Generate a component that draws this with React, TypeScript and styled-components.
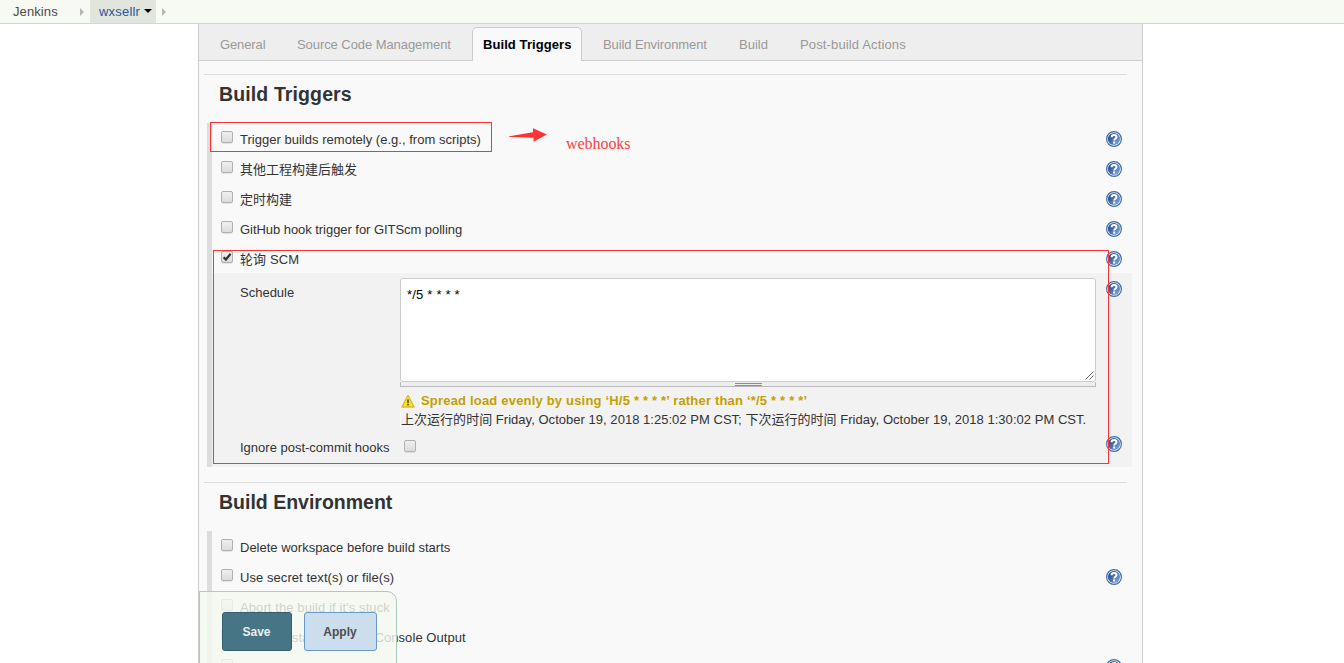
import React from "react";
import styled, { createGlobalStyle } from "styled-components";

const GlobalStyle = createGlobalStyle`
  * { box-sizing: border-box; }
  html, body { margin: 0; background: #fff; }
  body {
    height: 663px;
    overflow: hidden;
    color: #333;
    font: 13px/15px "Liberation Sans", "Noto Sans CJK SC", sans-serif;
  }
`;

const Page = styled.div`
  position: relative;
  height: 663px;
  overflow: hidden;
`;

const Breadcrumbs = styled.nav`
  display: flex;
  height: 24px;
  background: #f6faf2;
  border-bottom: 1px solid #d3d7cf;
`;

const Crumb = styled.span<{ $current?: boolean }>`
  display: flex;
  gap: 4px;
  width: ${(p) => (p.$current ? 66 : 80)}px;
  height: 23px;
  padding: ${(p) => (p.$current ? "4px 0 0 9px" : "4px 0 0 13px")};
  color: ${(p) => (p.$current ? "#2a5596" : "#4d4d4d")};
  background: ${(p) => (p.$current ? "#e2e5dc" : "transparent")};
  letter-spacing: ${(p) => (p.$current ? "0.2px" : "0.1px")};
`;

const Separator = styled.i<{ $before?: number }>`
  width: 0;
  height: 0;
  margin: 8px 6px 0 ${(p) => p.$before ?? 0}px;
  border: solid transparent;
  border-width: 4px 0 4px 4px;
  border-left-color: #b5b5b5;
`;

const Caret = styled.i`
  width: 0;
  height: 0;
  margin-top: 5px;
  border: solid transparent;
  border-width: 4px 4px 0 4px;
  border-top-color: #000;
`;

const Panel = styled.main`
  width: 945px;
  height: 639px;
  margin-left: 198px;
  overflow: hidden;
  background: #f9f9f9;
  border: solid #ccc;
  border-width: 0 1px;
`;

const TabBar = styled.div`
  display: flex;
  height: 37px;
  margin-bottom: 13px;
  padding: 3px 0 0 11px;
  background: #eee;
  border-bottom: 1px solid #ccc;
`;

const Tab = styled.div<{ $active?: boolean; $width: number; $tracking: number }>`
  width: ${(p) => p.$width}px;
  height: 34px;
  padding: ${(p) => (p.$active ? "9px 0 0 10px" : "10px 0 0 10px")};
  white-space: nowrap;
  letter-spacing: ${(p) => p.$tracking}px;
  color: ${(p) => (p.$active ? "#000" : "#999")};
  font-weight: ${(p) => (p.$active ? "bold" : "normal")};
  background: ${(p) => (p.$active ? "#f9f9f9" : "transparent")};
  border: ${(p) => (p.$active ? "1px solid #ccc" : "0")};
  border-bottom: 0;
  border-radius: 5px 5px 0 0;
  margin-right: ${(p) => (p.$active ? "11px" : "0")};
`;

const Section = styled.section`
  margin: 0 10px 15px 5px;
`;

const SectionTitle = styled.h2<{ $tracking?: number }>`
  height: 49px;
  margin: 0 5px 0 0;
  padding: 8px 0 0 15px;
  border-top: 1px solid #ddd;
  font-size: 19.5px;
  line-height: 22px;
  letter-spacing: ${(p) => p.$tracking ?? 0}px;
`;

const Options = styled.div`
  margin-left: 3px;
  border-left: 5px solid #ddd;
`;

const Row = styled.div`
  display: flex;
  align-items: flex-start;
  height: 30px;
  padding: 8px 10px 0 9px;
`;

const RowLabel = styled.span<{ $tracking: number }>`
  flex: 1;
  padding: 1px 0 0 7px;
  letter-spacing: ${(p) => p.$tracking}px;
`;

const Box = styled.span`
  display: block;
  flex: none;
  width: 12px;
  height: 12px;
  border: 1px solid #b0b0b0;
  border-radius: 2px;
  background: linear-gradient(#efefef, #dcdcdc);
  box-shadow: 0 1px 0 rgba(0, 0, 0, 0.08);

  svg { display: block; overflow: visible; }
`;

const Nested = styled.div`
  height: 194px;
  padding: 5px 10px 0 28px;
  background: #f2f2f2;
`;

const Field = styled.div<{ $height: number }>`
  display: flex;
  height: ${(p) => p.$height}px;
`;

const FieldLabel = styled.span`
  width: 160px;
  padding-top: 7px;
`;

const FieldBody = styled.div`
  width: 696px;
  margin-right: 10px;
`;

const TextArea = styled.div`
  display: flex;
  align-items: flex-end;
  justify-content: space-between;
  height: 104px;
  border: 1px solid #ccc;
  border-radius: 3px;
  background: #fff;
  color: #000;
  letter-spacing: 0.2px;

  span { align-self: flex-start; padding: 8px 0 0 6px; }
`;

const ResizeHandle = styled.div`
  display: flex;
  justify-content: center;
  height: 5px;
  background: #eee;
  border: solid #bbb;
  border-width: 0 1px 1px;

  i {
    width: 27px;
    height: 3px;
    margin-top: 1px;
    border: solid #8b8f86;
    border-width: 1px 0;
  }
`;

const Warning = styled.div`
  display: flex;
  height: 25px;
  padding-top: 6px;
  color: #c4a000;
  font-weight: bold;
  letter-spacing: 0.19px;

  svg { margin-right: 4px; }
  span { height: 15px; border-left: 1px solid #fcfcfc; white-space: nowrap; }
`;

const Info = styled.div`
  border-left: 1px solid #fcfcfc;
  white-space: nowrap;
  letter-spacing: 0.03px;
`;

const FieldCheck = styled.div`
  padding: 7px 0 0 4px;
`;

const HelpSlot = styled.span`
  padding-top: 3px;
`;

const HelpGraphic = styled.svg`
  display: block;
  flex: none;
`;

const ActionBar = styled.div`
  position: absolute;
  left: 199px;
  top: 591px;
  display: flex;
  gap: 12px;
  width: 198px;
  height: 82px;
  padding: 20px 0 0 22px;
  background: rgba(244, 249, 239, 0.8);
  border: 1px solid #a9cdb9;
  border-radius: 0 10px 0 0;
`;

const Button = styled.button<{ $primary?: boolean }>`
  width: ${(p) => (p.$primary ? 70 : 73)}px;
  height: 39px;
  padding: 0 1px 0 0;
  border: 1px solid ${(p) => (p.$primary ? "#355f6f" : "#6699cc")};
  border-radius: 3px;
  background: ${(p) => (p.$primary ? "#467586" : "#ccdded")};
  color: ${(p) => (p.$primary ? "#eee" : "#4d4d4d")};
  font: bold 12px "Liberation Sans", sans-serif;
`;

const Highlight = styled.div<{ $x: number; $y: number; $w: number; $h: number }>`
  position: absolute;
  left: ${(p) => p.$x}px;
  top: ${(p) => p.$y}px;
  width: ${(p) => p.$w}px;
  height: ${(p) => p.$h}px;
  border: 1px solid #f33;
`;

const Arrow = styled.svg`
  position: absolute;
  left: 509px;
  top: 127px;
`;

const Note = styled.span`
  position: absolute;
  left: 566px;
  top: 135px;
  color: #ff4040;
  font: 16px/18px "Liberation Serif", serif;
  letter-spacing: -0.05px;
`;

function HelpIcon() {
  return (
    <HelpGraphic width="16" height="16" viewBox="0 0 16 16">
      <defs>
        <linearGradient id="help" x1="0" y1="0.1" x2="1" y2="0.9">
          <stop offset="0.2" stopColor="#2a5595" />
          <stop offset="0.9" stopColor="#7ba3d6" />
        </linearGradient>
      </defs>
      <circle cx="8" cy="8" r="7.4" fill="#eef3fa" stroke="#456fa8" strokeWidth="1.2" />
      <circle cx="8" cy="8" r="6.1" fill="url(#help)" />
      <path d="M5.6 6.3C5.6 4.7 6.6 4 8.1 4c1.5 0 2.4.8 2.4 2 0 1.8-2.3 1.7-2.3 3.5" fill="none" stroke="#fff" strokeWidth="2" />
      <rect x="7.1" y="10.5" width="2.1" height="2" fill="#fff" />
    </HelpGraphic>
  );
}

function WarningIcon() {
  return (
    <svg width="16" height="16" viewBox="0 0 16 16">
      <path d="M8 2.4 14.2 14H1.8Z" fill="#f7e02c" stroke="#dfbc22" strokeWidth="1.3" strokeLinejoin="round" />
      <path d="M8 6.6v3.6M8 11.1v1.5" stroke="#5b511a" strokeWidth="1.6" />
    </svg>
  );
}

function Checkbox({ checked }: { checked?: boolean }) {
  return (
    <Box>
      {checked && (
        <svg width="10" height="10" viewBox="0 0 10 10">
          <path d="M1.6 5.2 3.9 7.5 8.6 1.8" fill="none" stroke="#333" strokeWidth="2.2" />
        </svg>
      )}
    </Box>
  );
}

interface OptionProps {
  label: string;
  checked?: boolean;
  help?: boolean;
  tracking?: number;
}

function Option({ label, checked, help, tracking = 0 }: OptionProps) {
  return (
    <Row>
      <Checkbox checked={checked} />
      <RowLabel $tracking={tracking}>{label}</RowLabel>
      {help && <HelpIcon />}
    </Row>
  );
}

export default function App() {
  return (
    <Page>
      <GlobalStyle />
      <Breadcrumbs>
        <Crumb>Jenkins</Crumb>
        <Separator />
        <Crumb $current>
          wxsellr
          <Caret />
        </Crumb>
        <Separator $before={6} />
      </Breadcrumbs>
      <Panel>
        <TabBar>
          <Tab $width={77} $tracking={-0.12}>General</Tab>
          <Tab $width={185} $tracking={-0.07}>Source Code Management</Tab>
          <Tab $width={110} $tracking={0.08} $active>Build Triggers</Tab>
          <Tab $width={136} $tracking={-0.1}>Build Environment</Tab>
          <Tab $width={61} $tracking={0}>Build</Tab>
          <Tab $width={130} $tracking={0.14}>Post-build Actions</Tab>
        </TabBar>
        <Section>
          <SectionTitle $tracking={0.12}>Build Triggers</SectionTitle>
          <Options>
            <Option label="Trigger builds remotely (e.g., from scripts)" tracking={0.02} help />
            <Option label="其他工程构建后触发" help />
            <Option label="定时构建" help />
            <Option label="GitHub hook trigger for GITScm polling" tracking={-0.05} help />
            <Option label="轮询 SCM" tracking={0.1} checked help />
            <Nested>
              <Field $height={155}>
                <FieldLabel>Schedule</FieldLabel>
                <FieldBody>
                  <TextArea>
                    <span>*/5 * * * *</span>
                    <svg width="10" height="10" viewBox="0 0 10 10">
                      <path d="M0.5 8.5 8.5 0.5M4.5 8.5 8.5 4.5" stroke="#666" strokeWidth="1" />
                    </svg>
                  </TextArea>
                  <ResizeHandle><i /></ResizeHandle>
                  <Warning>
                    <WarningIcon />
                    <span>Spread load evenly by using ‘H/5 * * * *’ rather than ‘*/5 * * * *’</span>
                  </Warning>
                  <Info>
                    上次运行的时间 Friday, October 19, 2018 1:25:02 PM CST; 下次运行的时间 Friday, October 19, 2018 1:30:02 PM CST.
                  </Info>
                </FieldBody>
                <HelpSlot><HelpIcon /></HelpSlot>
              </Field>
              <Field $height={30}>
                <FieldLabel>Ignore post-commit hooks</FieldLabel>
                <FieldBody>
                  <FieldCheck><Checkbox /></FieldCheck>
                </FieldBody>
                <HelpSlot><HelpIcon /></HelpSlot>
              </Field>
            </Nested>
          </Options>
        </Section>
        <Section>
          <SectionTitle>Build Environment</SectionTitle>
          <Options>
            <Option label="Delete workspace before build starts" />
            <Option label="Use secret text(s) or file(s)" tracking={0.06} help />
            <Option label="Abort the build if it's stuck" tracking={0.1} />
            <Option label="Add timestamps to the Console Output" tracking={0.07} />
            <Option label="With Ant" help />
          </Options>
        </Section>
      </Panel>
      <ActionBar>
        <Button $primary>Save</Button>
        <Button>Apply</Button>
      </ActionBar>
      <Highlight $x={210} $y={122} $w={282} $h={30} />
      <Highlight $x={213} $y={250} $w={896} $h={214} />
      <Arrow width="40" height="16" viewBox="0 0 40 16">
        <path d="M0.3 9.2 24 5.2V1.2L37.8 7.4 24.5 14.7V10.8L0.3 10Z" fill="#f33" />
      </Arrow>
      <Note>webhooks</Note>
    </Page>
  );
}
